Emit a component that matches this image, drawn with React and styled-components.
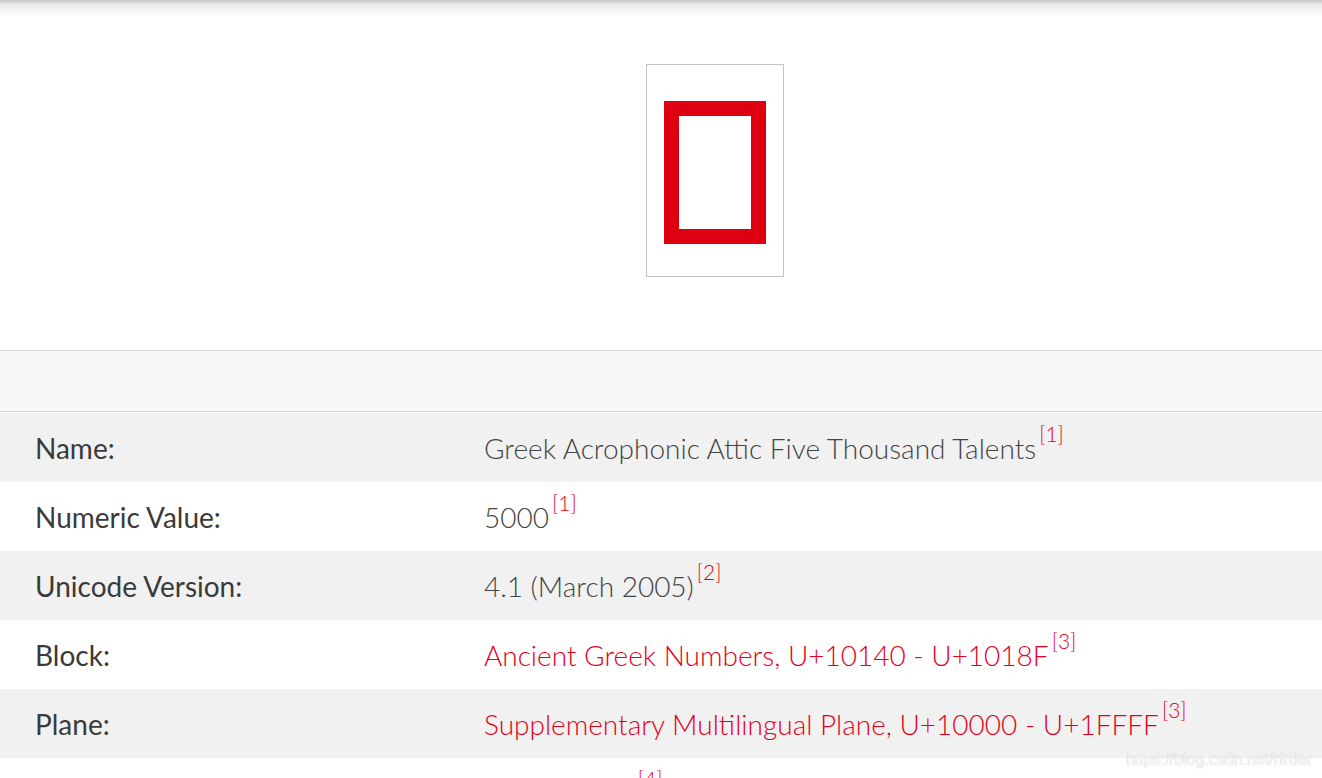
import React from "react";
import styled, { createGlobalStyle } from "styled-components";

const Global = createGlobalStyle`
  html, body { margin: 0; padding: 0; background: #fff; }
  body { font-family: Lato, "Open Sans", sans-serif; overflow: hidden; }
`;

const Page = styled.div`
  position: relative;
  width: 1322px;
  height: 778px;
  overflow: hidden;
`;

const TopShadow = styled.div`
  position: absolute;
  left: 0;
  top: 0;
  right: 0;
  height: 16px;
  background: linear-gradient(to bottom, rgba(0,0,0,0.22), rgba(0,0,0,0.08) 30%, rgba(0,0,0,0));
  pointer-events: none;
`;

const Hero = styled.section`
  height: 350px;
  display: flex;
  justify-content: center;
  align-items: flex-start;
  padding-left: 107px;
  box-sizing: border-box;
  padding-top: 64px;
`;

const GlyphBox = styled.div`
  width: 136px;
  height: 211px;
  border: 1px solid #c4c4c4;
  display: flex;
`;

const Band = styled.div`
  height: 60px;
  background: #f8f8f8;
  border-top: 1px solid #d6d6d6;
  border-bottom: 1px solid #d3d3d3;
  margin-bottom: 1px;
`;

const Table = styled.div`
  display: flex;
  flex-direction: column;
`;

const Row = styled.div`
  display: grid;
  grid-template-columns: 449px 1fr;
  height: 69px;
  padding-left: 35px;
  background: ${(p) => (p.$shade ? "#f1f1f1" : "#fff")};
  align-items: center;
`;

const Label = styled.div`
  font-size: 28px;
  font-weight: 400;
  color: #3a3a3a;
`;

const Value = styled.div`
  font-size: 28px;
  font-weight: 300;
  color: ${(p) => (p.$link ? "#e5001a" : "#444")};
`;

const Ref = styled.sup`
  font-size: 21px;
  font-weight: 300;
  color: #e5001a;
  margin-left: 3px;
  vertical-align: 0;
  position: relative;
  top: -17px;
`;

const Watermark = styled.div`
  position: absolute;
  right: 10px;
  bottom: 9px;
  font-family: "Liberation Sans", Arial, sans-serif;
  font-size: 16px;
  color: rgba(255,255,255,0.92);
  text-shadow: 0 0 1px rgba(0,0,0,0.3);
`;

const rows = [
  ["Name:", "Greek Acrophonic Attic Five Thousand Talents", "1", false],
  ["Numeric Value:", "5000", "1", false],
  ["Unicode Version:", "4.1 (March 2005)", "2", false],
  ["Block:", "Ancient Greek Numbers, U+10140 - U+1018F", "3", true],
  ["Plane:", "Supplementary Multilingual Plane, U+10000 - U+1FFFF", "3", true],
  ["Script:", "Greek (Grek)", "4", false],
];

export default function App() {
  return (
    <Page>
      <Global />
      <Hero>
        <GlyphBox>
          <svg width="136" height="211" viewBox="0 0 136 211">
            <rect x="24.5" y="43.5" width="87" height="128" fill="none" stroke="#de0011" strokeWidth="15" />
          </svg>
        </GlyphBox>
      </Hero>
      <Band />
      <Table>
        {rows.map(([l, v, r, link], i) => (
          <Row key={l} $shade={i % 2 === 0}>
            <Label>{l}</Label>
            <Value $link={link}>
              {v}
              <Ref>[{r}]</Ref>
            </Value>
          </Row>
        ))}
      </Table>
      <Watermark>https://blog.csdn.net/rfrder</Watermark>
      <TopShadow />
    </Page>
  );
}
